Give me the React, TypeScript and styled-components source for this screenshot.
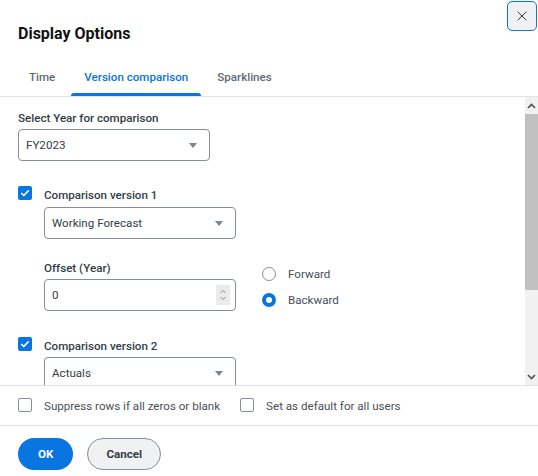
import React from "react"
import styled, { createGlobalStyle } from "styled-components"
import { X } from "lucide-react"

const colors = {
  blue: "#0875e1",
  text: "#333d47",
  muted: "#5e6a75",
  body: "#494f56",
  border: "#858e97",
  divider: "#dfe2e6",
  soap: "#f0f1f2",
}

const GlobalStyle = createGlobalStyle`
  html, body {
    margin: 0;
    padding: 0;
    background: #fff;
  }
  body {
    font-family: Roboto, "Liberation Sans", Arial, sans-serif;
    color: ${colors.text};
  }
  * {
    box-sizing: border-box;
  }
`

const Dialog = styled.div`
  width: 538px;
  height: 476px;
  display: flex;
  flex-direction: column;
  background: #fff;
`

const Header = styled.div`
  height: 56px;
  display: flex;
  justify-content: space-between;
  align-items: flex-start;
  padding-left: 18px;
  padding-right: 1px;
`

const Title = styled.h2`
  margin: 24px 0 0;
  font-size: 16px;
  line-height: 20px;
  font-weight: 700;
  color: #121212;
`

const CloseButton = styled.button`
  margin-top: 1px;
  width: 30px;
  height: 30px;
  border: 1.2px solid ${colors.blue};
  border-radius: 5px;
  background: ${colors.soap};
  color: #333d47;
  display: flex;
  align-items: center;
  justify-content: center;
  padding: 0;
  cursor: pointer;
`

const TabBar = styled.div`
  height: 41px;
  display: flex;
  gap: 3px;
  padding-left: 16px;
  border-bottom: 1px solid ${colors.divider};
`

const Tab = styled.div<{ $active?: boolean }>`
  position: relative;
  height: 40px;
  padding: 2px 13px 0;
  display: flex;
  align-items: center;
  font-size: 11.6px;
  font-weight: 500;
  color: ${(p) => (p.$active ? colors.blue : colors.muted)};

  &::after {
    content: "";
    display: ${(p) => (p.$active ? "block" : "none")};
    position: absolute;
    left: 0;
    right: 0;
    bottom: 0;
    height: 3px;
    border-radius: 3px 3px 0 0;
    background: ${colors.blue};
  }
`

const ScrollArea = styled.div`
  flex: 1;
  min-height: 0;
  display: flex;
  border-bottom: 1px solid ${colors.divider};
`

const Viewport = styled.div`
  flex: 1;
  min-width: 0;
  overflow-y: auto;
  scrollbar-width: none;

  &::-webkit-scrollbar {
    display: none;
  }
`

const ScrollTrack = styled.div`
  flex: none;
  width: 13px;
  background: #f1f1f1;
  display: flex;
  flex-direction: column;
`

const ScrollButton = styled.div`
  height: 17px;
  display: flex;
  align-items: center;
  justify-content: center;
`

const ScrollThumb = styled.div`
  background: #c1c1c1;
`

const ScrollRest = styled.div`
  flex: 1;
`

const Content = styled.div`
  padding: 13px 18px 26px;
  display: flex;
  flex-direction: column;
`

const Field = styled.div<{ $top?: number }>`
  display: flex;
  flex-direction: column;
  gap: 3px;
  margin-top: ${(p) => p.$top ?? 0}px;
`

const Label = styled.label`
  font-size: 11.6px;
  line-height: 16px;
  font-weight: 500;
  color: ${colors.text};
`

const SelectBox = styled.div`
  width: 192px;
  height: 32px;
  border: 1px solid ${colors.border};
  border-radius: 4px;
  display: flex;
  align-items: center;
  justify-content: space-between;
  padding: 0 12px 0 7px;
  font-size: 11.6px;
  color: ${colors.text};
  background: #fff;
`

const NumberBox = styled(SelectBox)`
  padding: 0 5px 0 7px;
`

const StepperBox = styled.div`
  width: 14px;
  height: 20px;
  background: #ebebeb;
  display: flex;
  align-items: center;
  justify-content: center;
`

const CheckRow = styled.div<{ $top?: number }>`
  display: flex;
  align-items: flex-start;
  gap: 12px;
  margin-top: ${(p) => p.$top ?? 0}px;
`

const CheckBoxBox = styled.span<{ $checked?: boolean }>`
  flex: none;
  width: 14px;
  height: 14px;
  margin-top: -1px;
  border-radius: 2px;
  border: ${(p) => (p.$checked ? "none" : `1.5px solid ${colors.border}`)};
  background: ${(p) => (p.$checked ? colors.blue : "#fff")};
  display: flex;
  align-items: center;
  justify-content: center;
`

const Indented = styled.div`
  padding-left: 26px;
  display: flex;
  flex-direction: column;
`

const OffsetRow = styled.div`
  display: flex;
  align-items: center;
  gap: 26px;
  margin-top: 21px;
`

const RadioGroup = styled.div`
  display: flex;
  flex-direction: column;
  gap: 10px;
  padding-top: 2px;
`

const RadioRow = styled.div`
  display: flex;
  align-items: center;
  gap: 12px;
  height: 16px;
  font-size: 11.6px;
  color: ${colors.body};
`

const RadioDot = styled.span<{ $checked?: boolean }>`
  width: 14px;
  height: 14px;
  border-radius: 50%;
  background: #fff;
  border: ${(p) => (p.$checked ? `4px solid ${colors.blue}` : `1.3px solid ${colors.border}`)};
`

const OptionsBar = styled.div`
  height: 40px;
  display: flex;
  align-items: center;
  gap: 20px;
  padding: 0 18px;
  border-bottom: 1px solid ${colors.divider};
`

const Option = styled.div`
  display: flex;
  align-items: center;
  gap: 12px;
  font-size: 11.6px;
  color: ${colors.body};
`

const Actions = styled.div`
  flex: none;
  height: 50px;
  display: flex;
  align-items: flex-start;
  gap: 14px;
  padding: 12px 18px 0;
`

const Button = styled.button<{ $primary?: boolean }>`
  height: 32px;
  padding: 0 ${(p) => (p.$primary ? 20 : 18)}px;
  border-radius: 999px;
  font-family: inherit;
  font-size: 11.6px;
  font-weight: 700;
  cursor: pointer;
  border: ${(p) => (p.$primary ? "none" : `1px solid ${colors.border}`)};
  background: ${(p) => (p.$primary ? colors.blue : colors.soap)};
  color: ${(p) => (p.$primary ? "#fff" : colors.text)};
`

const Caret = () => (
  <svg width="8" height="5" viewBox="0 0 8 5">
    <path d="M0 0 H8 L4 5 Z" fill="#7b858f" />
  </svg>
)

const Check = () => (
  <svg width="10" height="8" viewBox="0 0 10 8">
    <path d="M1.3 4.2 L3.8 6.5 L8.7 1.4" fill="none" stroke="#fff" strokeWidth="1.6" />
  </svg>
)

const Chevron = ({ up }: { up?: boolean }) => (
  <svg width="9" height="6" viewBox="0 0 9 6">
    <path
      d={up ? "M1 5 L4.5 1.5 L8 5" : "M1 1 L4.5 4.5 L8 1"}
      fill="none"
      stroke="#505050"
      strokeWidth="1.6"
    />
  </svg>
)

const Stepper = () => (
  <StepperBox>
    <svg width="8" height="14" viewBox="0 0 8 14">
      <path d="M1.5 5 L4 2.5 L6.5 5" fill="none" stroke="#8a8a8a" strokeWidth="1" />
      <path d="M1.5 9 L4 11.5 L6.5 9" fill="none" stroke="#8a8a8a" strokeWidth="1" />
    </svg>
  </StepperBox>
)

const Select = ({ value }: { value: string }) => (
  <SelectBox>
    <span>{value}</span>
    <Caret />
  </SelectBox>
)

const CheckBox = ({ checked }: { checked?: boolean }) => (
  <CheckBoxBox $checked={checked}>{checked && <Check />}</CheckBoxBox>
)

export default function App() {
  return (
    <>
      <GlobalStyle />
      <Dialog>
        <Header>
          <Title>Display Options</Title>
          <CloseButton aria-label="Close">
            <X size={16} strokeWidth={1.5} />
          </CloseButton>
        </Header>

        <TabBar>
          <Tab>Time</Tab>
          <Tab $active>Version comparison</Tab>
          <Tab>Sparklines</Tab>
        </TabBar>

        <ScrollArea>
          <Viewport>
            <Content>
              <Field>
                <Label>Select Year for comparison</Label>
                <Select value="FY2023" />
              </Field>

              <CheckRow $top={26}>
                <CheckBox checked />
                <Label>Comparison version 1</Label>
              </CheckRow>
              <Indented>
                <Field $top={4}>
                  <Select value="Working Forecast" />
                </Field>
                <OffsetRow>
                  <Field>
                    <Label>Offset (Year)</Label>
                    <NumberBox>
                      <span>0</span>
                      <Stepper />
                    </NumberBox>
                  </Field>
                  <RadioGroup>
                    <RadioRow>
                      <RadioDot />
                      Forward
                    </RadioRow>
                    <RadioRow>
                      <RadioDot $checked />
                      Backward
                    </RadioRow>
                  </RadioGroup>
                </OffsetRow>
              </Indented>

              <CheckRow $top={27}>
                <CheckBox checked />
                <Label>Comparison version 2</Label>
              </CheckRow>
              <Indented>
                <Field $top={3}>
                  <Select value="Actuals" />
                </Field>
              </Indented>
            </Content>
          </Viewport>
          <ScrollTrack>
            <ScrollButton>
              <Chevron up />
            </ScrollButton>
            <ScrollThumb style={{ height: 176 }} />
            <ScrollRest />
            <ScrollButton>
              <Chevron />
            </ScrollButton>
          </ScrollTrack>
        </ScrollArea>

        <OptionsBar>
          <Option>
            <CheckBox />
            Suppress rows if all zeros or blank
          </Option>
          <Option>
            <CheckBox />
            Set as default for all users
          </Option>
        </OptionsBar>

        <Actions>
          <Button $primary>OK</Button>
          <Button>Cancel</Button>
        </Actions>
      </Dialog>
    </>
  )
}
